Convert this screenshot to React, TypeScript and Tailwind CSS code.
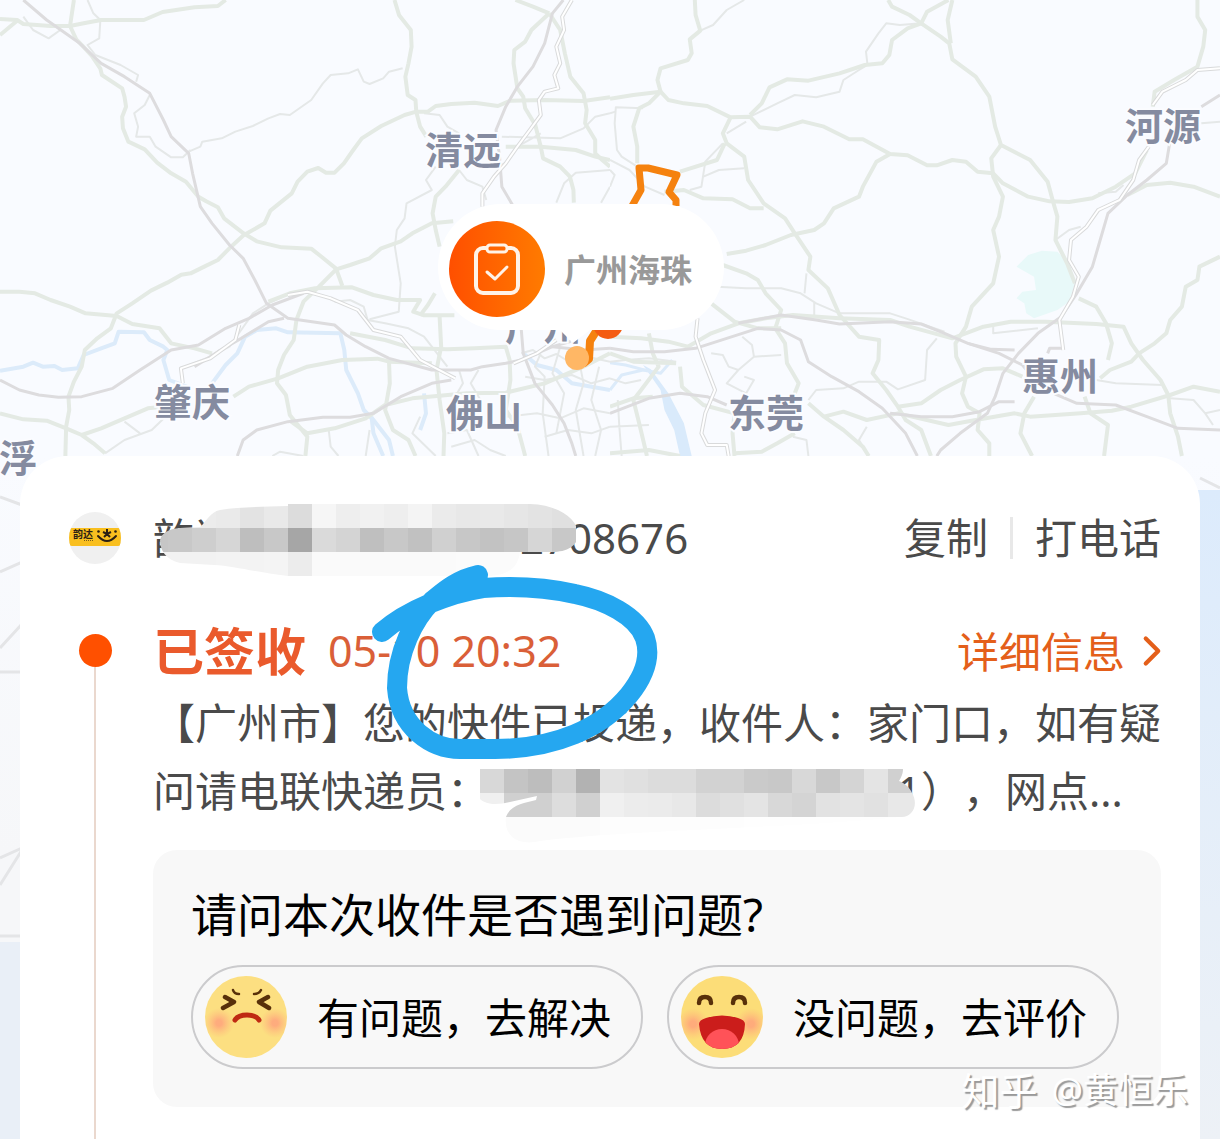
import { ChevronRight } from "lucide-react";

const GREEN = "#e4eae4";
const GREY = "#dddcde";
const WATER = "#dcebfa";

// Each half of the map uses its own 1568x1380 grid.
const westHighways = [
  "M190 0L180 78L196 118L214 140L236 168L258 206L262 225L314 265L320 290L324 320L314 350L316 385L330 425L372 448L404 488L440 520L478 545L510 590L530 604L560 622L576 655L626 700L660 724L724 742L800 746L824 768L864 806L880 858",
  "M0 57L44 60L60 72L130 78L180 78L215 70L260 60L370 60L418 36L500 22L560 18L580 0",
  "M0 105L44 62",
  "M1014 0L1026 46L1056 90L1058 140L1050 190L1042 230L1048 285L1068 300L1070 335L1100 335L1120 318L1160 312L1220 308L1280 318L1312 302L1400 300L1500 303L1568 292",
  "M1070 335L1040 345L980 378L930 415L908 450L884 490L860 518L838 518L818 504L790 515L765 545L750 580L695 632L680 670L626 706L594 740L560 780L525 800L490 820L466 824L430 848L388 872L340 910L300 940L285 985L250 1015L218 1050L210 1100L190 1145L176 1190L178 1230L170 1280L168 1368",
  "M0 875L50 875L90 880L130 900L180 920L220 940L300 948L340 972L410 985L440 1030L500 1045L545 1060",
  "M1412 40L1366 90L1350 125L1322 150L1320 190L1330 265L1345 290L1350 325L1376 375L1390 440L1396 475L1440 500L1465 530L1474 570L1475 608",
  "M1412 40L1440 90L1452 160L1466 230L1500 280L1508 330L1504 370L1530 420L1530 460L1548 480L1568 500",
  "M1412 40L1370 20L1325 0",
  "M1070 335L1080 380L1096 410M1180 510L1145 560L1120 590L1112 640L1120 690L1130 740",
  "M1165 664L1110 670L1060 700L1030 724L980 745L950 775L900 795L864 808L820 860L780 905L762 960L755 1020L730 1065L715 1110L712 1150L735 1185L745 1245L790 1310L785 1368",
  "M690 905L745 880L810 865L905 862L960 885L1020 900L1080 900L1062 935L1090 946L1168 946",
  "M1080 946L1100 915L1118 880M1130 950L1134 1040L1122 1110",
  "M600 1190L640 1160L715 1135L790 1100L880 1080L970 1076L1000 1085L1110 1090",
  "M900 1000L990 1020L1060 1045L1150 1048L1220 1045L1300 1040L1310 1080L1312 1140L1300 1230L1330 1280L1350 1368",
  "M0 1240L60 1258L120 1262L170 1285L210 1305L260 1285L320 1255L380 1225L420 1220M210 1305L240 1330L270 1360",
  "M745 1262L790 1300L860 1285L940 1255L990 1215L1060 1195L1200 1180L1300 1178L1400 1150L1500 1100L1568 1060",
  "M1000 1085L1002 1150L990 1230L1010 1290L1050 1320L1068 1368",
  "M1122 1110L1130 1200L1142 1300L1140 1368",
  "M1300 440L1390 440L1480 450L1530 470L1568 480",
];

const westRailways = [
  "M60 0L120 60L205 130L260 190L320 230L385 280L420 360L440 410L485 460L495 520L515 620L545 670L590 735L625 775L655 840L685 910L740 955L860 975L890 1005L940 1040L1000 1075L1110 1110L1210 1110L1240 1100L1300 1090L1340 1080L1420 1040L1480 1020",
  "M1448 0L1420 40L1400 130L1370 200L1330 260L1300 320L1275 390L1284 470L1290 560L1320 620",
  "M0 1140L50 1170L100 1185L150 1192L210 1190L290 1165L360 1110L440 1050L510 1035L580 985L640 955L700 915L780 880",
  "M610 1368L625 1320L660 1290L740 1265L830 1252L900 1252L960 1240L1030 1190L1110 1150L1160 1140",
  "M500 1100L560 1055L620 1015L690 965L730 955",
  "M1340 990L1345 1060L1375 1150L1420 1215L1450 1270L1470 1330L1480 1368",
  "M1420 1040L1500 1050L1568 1045",
];

const westRoads = [
  "M225 0L240 40L258 60L255 115L225 135L245 165L310 195L355 225L350 245M385 285L372 315L345 340L355 380L350 410L385 410L400 440L440 472L470 472L490 450",
  "M485 455L515 440L520 425L570 415L605 395L650 378L690 355L720 342L745 345L800 300L830 250L850 225L895 220L920 208L935 245L950 252L985 235L1000 215L1035 205",
  "M60 50L85 90L125 115L155 90",
  "M1090 340L1130 345L1150 380L1180 400M1180 510L1200 540L1240 560L1250 600M1120 500L1095 540L1110 570L1045 610L1040 655L1020 690L1015 740L1030 850L1025 935L950 958",
  "M1568 340L1530 350L1500 385L1440 415L1290 410M1270 500L1300 490L1330 440L1390 400",
  "M1568 510L1480 518L1450 550L1430 608M1568 560L1545 608",
  "M270 1360L320 1320L390 1290L430 1245M320 1265L360 1300",
  "M470 1150L465 1105L540 1070L590 1040L620 990L650 940L690 910L750 878L800 875",
  "M860 905L900 900L935 920L945 960L990 970L1050 985L1090 1010L1150 1100",
  "M1180 1110L1190 1150L1170 1190M1230 1110L1210 1150L1235 1200L1215 1250",
  "M845 1290L850 1340L870 1368M950 1290L940 1368M700 1368L720 1355L780 1368",
  "M1340 1060L1370 1050L1400 1075L1430 1062L1470 1090L1510 1070L1568 1085M1350 1130L1400 1140L1470 1125L1520 1150L1568 1135",
  "M1300 1250L1380 1240L1440 1255L1500 1225L1568 1240M1400 1310L1460 1290L1520 1300L1568 1280",
  "M1390 1060L1375 1100L1400 1130L1395 1240L1410 1368M1440 1040L1420 1120L1450 1180L1430 1300M1490 1090L1500 1150L1480 1230L1500 1368M1540 1100L1520 1200L1545 1290L1530 1368",
  "M1160 1340L1220 1320L1260 1350L1300 1368M1150 1300L1200 1290L1230 1368M1080 1250L1060 1300L1120 1368",
];

const westWater = [
  "M0 1112L60 1100L85 1088L110 1100L140 1098L160 1110L200 1105L215 1065L260 1045L295 1030L305 995L370 997L385 1020L420 1040L430 1050L420 1080L435 1140L480 1160",
  "M545 1150L580 1095L610 1060L630 1010L660 990L710 985L740 997L875 1000L885 1050L890 1110L920 1180L935 1230L960 1260L1000 1320L1010 1368",
  "M955 1250L960 1300L985 1368",
  "M1345 1060L1380 1095L1430 1110L1470 1150L1568 1170M1090 1180L1095 1240L1080 1290",
];

const eastHighways = [
  "M218 0L220 45L232 92L205 118L210 160L200 180L130 205L122 240L130 275L100 310L75 325L60 380L70 440L70 490",
  "M0 296L60 285L130 275L150 300L190 310L250 318L310 352L360 350L385 382L430 388L495 364L550 380L615 418L650 418L720 462L765 466L815 496L840 496L880 480L915 485L945 515L985 520L1010 550L1075 590L1130 604L1180 606L1240 595L1300 560L1350 520L1380 450",
  "M715 0L725 20L770 45L800 70L765 85L725 120L718 165L700 190L655 195L590 220L510 242L455 238L410 262L390 310L360 345",
  "M800 70L850 110L872 130L880 178L940 230L975 290L990 380L1005 435L1080 480L1125 545L1140 610L1150 650L1145 720L1175 790L1195 850",
  "M880 0L868 60L876 130M800 70L815 35L870 0",
  "M1005 435L980 475L985 530L1010 590L1000 650L985 690L1000 770L985 850L930 920L915 980L888 1030L890 1070L915 1130L905 1180L920 1220L950 1240L945 1290L975 1330L975 1368",
  "M310 352L290 400L300 430L345 470L355 540L395 610L450 655L475 700L515 770L510 810L560 865L590 945L640 1010L692 1020L690 1080L675 1120L710 1170L740 1220L760 1260L800 1290L825 1368",
  "M295 430L275 480L180 515M140 575L190 570L240 595L315 598L360 625L395 625",
  "M720 462L685 485L650 560L640 590L575 625L550 670L525 690L465 705L400 735L350 752L300 762",
  "M290 795L350 820L380 840L400 880L440 930L425 985L450 1030L455 1090L485 1150L475 1180",
  "M1510 0L1510 50L1530 90L1525 140L1510 200L1450 240L1400 275L1395 320",
  "M1330 585L1380 555L1440 548L1500 560L1568 590",
  "M1568 770L1515 800L1510 840L1480 860L1470 920L1440 960L1430 1000L1400 1030L1360 1060L1340 1085L1285 1110L1260 1135",
  "M0 1010L80 1015L150 1025L200 1040L260 1000L330 970L400 955L470 945L590 955L720 960L770 980L880 1015L960 980L1030 965L1120 965L1250 972L1320 980L1340 1030L1370 1080L1415 1140L1435 1185L1440 1240L1460 1310L1470 1368",
  "M1205 895L1250 920L1275 970L1290 1030L1280 1080",
  "M510 1210L550 1250L600 1290L650 1340L665 1368M550 1250L600 1235L660 1260L740 1240L870 1275L940 1260L1040 1240L1080 1250L1210 1240L1290 1232L1340 1220L1440 1185L1500 1160L1568 1175",
  "M740 1220L800 1210L850 1170L900 1140L960 1108L1010 1105L1060 1130",
  "M1090 1190L1065 1240L1055 1300L1085 1368M1220 1190L1235 1240L1280 1275L1270 1368",
  "M180 1100L185 1160L240 1215L320 1240L315 1300L320 1368M475 1300L430 1330L390 1355L320 1360",
  "M0 1220L60 1195L110 1190M60 1200L75 1270L95 1368",
  "M100 1000L110 1060L125 1100L80 1170L60 1200M0 1060L60 1085L170 1090",
  "M260 910L320 965L380 985L440 985M0 1360L100 1350L180 1368",
];

const eastRailways = [
  "M0 1045L60 1055L140 1055L220 1045L300 1015L380 985L440 990L490 1020L510 1085L570 1130L640 1175L700 1225L760 1300L790 1368",
  "M330 970L440 945L530 960L590 972L720 965L800 972L860 1000L920 1030L1000 1060L1060 1095L1100 1150L1140 1180L1200 1210L1300 1215L1380 1250L1460 1285L1568 1290",
  "M1568 285L1520 320M1440 420L1430 490L1380 540L1330 585L1280 640L1260 720L1240 800L1200 880L1160 950L1100 1000L1050 1060L1010 1120L990 1190L970 1240L900 1300L850 1350L840 1368",
  "M720 1240L800 1250L880 1250L950 1235L1000 1205L1040 1205",
  "M0 1240L100 1195L180 1180L250 1190L300 1215",
  "M1040 1050L980 1048L920 1030M1125 1060L1130 1045L1160 1045",
];

const eastRoads = [
  "M345 0L300 30L265 75L232 92M800 70L745 75L710 70L690 100L658 155L662 195L640 210L600 240L590 275L530 292L475 285L430 310L360 350",
  "M85 325L15 322L12 370L18 450L30 470L70 500M0 480L50 510L90 560L140 585",
  "M0 340L14 335M0 510L12 525L0 560",
  "M300 400L350 365M290 430L245 485L235 560L205 570M345 505L280 510L240 530",
  "M275 860L350 865L440 865L490 880L530 910L590 940L660 940L720 940L760 955L860 995M505 820L500 880M525 905L525 945",
  "M260 1060L290 1065L305 1100L330 1110L370 1070L440 1065M370 1070L365 1035L340 1010M330 1110L300 1150L350 1180L370 1140L345 1130",
  "M510 1200L530 1170L600 1165L640 1145L710 1145L740 1168L810 1140L815 1050L840 1015",
  "M1145 720L1180 690L1210 680M1255 580L1300 575L1320 555",
  "M985 980L985 1000L1100 985M1250 1140L1300 1150L1420 1155L1440 1190",
  "M1440 1195L1500 1200L1530 1240L1568 1230M1530 1240L1550 1275M1520 370L1568 365",
  "M0 1085L40 1080L100 1075L170 1085M0 1135L40 1150L80 1140M0 1280L100 1275M20 1200L24 1280L30 1368",
  "M470 1310L505 1320L510 1368M660 1280L640 1320L665 1368",
];

const eastWater = ["M0 1170L30 1125L85 1110L130 1120L160 1080", "M0 1088L40 1095L95 1112"];

// White-cased roads, drawn as a grey line with a white core.
const casedWest = [
  "M1470 0L1445 50L1450 90L1430 140L1440 190L1425 225L1435 265L1400 275L1385 300L1390 345L1365 385L1330 440L1300 490L1270 530L1240 580L1240 620",
  "M740 885L790 875L850 895L920 930L960 990L1030 1010L1080 1080L1170 1135",
  "M470 1150L465 1105L540 1075L605 1020L615 975",
  "M1320 1090L1380 1060L1430 1020",
];
const casedEast = [
  "M1568 205L1510 210L1480 240L1420 275L1395 315M1385 440L1360 480L1345 540L1310 600L1255 630L1225 680L1185 720L1180 780L1205 830L1190 890L1155 960L1165 1050",
  "M225 955L220 1010L240 1080L270 1170L245 1240L235 1300L250 1335L300 1335L305 1368",
];

const cities = [
  { name: "清远", x: 425, y: 164 },
  { name: "河源", x: 1125, y: 140 },
  { name: "广州", x: 505, y: 340 },
  { name: "肇庆", x: 154, y: 416 },
  { name: "佛山", x: 446, y: 427 },
  { name: "东莞", x: 728, y: 427 },
  { name: "惠州", x: 1022, y: 390 },
  { name: "浮", x: -1, y: 472 },
];

function Lines({ paths, color, width }: { paths: string[]; color: string; width: number }) {
  return (
    <g fill="none" stroke={color} strokeWidth={width} strokeLinejoin="round">
      {paths.map((d) => (
        <path key={d} d={d} vectorEffect="non-scaling-stroke" />
      ))}
    </g>
  );
}

function RouteMap() {
  return (
    <svg viewBox="0 0 1220 1139" className="absolute inset-x-0 top-0 w-full" role="img" aria-label="物流地图">
      <defs>
        <linearGradient id="land" x1="0" y1="0" x2="0" y2="1">
          <stop offset="0.4" stopColor="#f9fbff" />
          <stop offset="0.75" stopColor="#f6f7f9" />
        </linearGradient>
        <linearGradient id="sea" x1="0" y1="0" x2="0" y2="1">
          <stop offset="0" stopColor="#dcebfc" />
          <stop offset="1" stopColor="#edf1f6" />
        </linearGradient>
        <linearGradient id="pin">
          <stop offset="0" stopColor="#ff4f00" />
          <stop offset="1" stopColor="#ff7b00" />
        </linearGradient>
      </defs>
      <rect width="1220" height="1139" fill="url(#land)" />
      <path d="M1190 490H1220V1139H1190Z" fill="url(#sea)" />
      <path d="M0 942H30V1139H0Z" fill="#e9eff7" />
      <g fill="none" stroke="#e4e5e7" strokeWidth="3">
        <path d="M0 497L22 505M0 572L22 562L30 545M0 648L22 624M0 672H22M0 858L22 848M0 885L22 850M0 936H22" />
        <path d="M1200 478L1220 488" />
      </g>

      <svg width="610" height="460" viewBox="0 0 1568 1380" preserveAspectRatio="none">
        <Lines paths={westWater} color={WATER} width={4} />
        <Lines paths={westRoads} color="#e5e8e8" width={2} />
        <Lines paths={westHighways} color={GREEN} width={4} />
        <Lines paths={westRailways} color={GREY} width={3} />
        <Lines paths={casedWest} color="#d9dadb" width={4} />
        <Lines paths={casedWest} color="#ffffff" width={2} />
      </svg>
      <svg x="610" width="610" height="460" viewBox="0 0 1568 1380" preserveAspectRatio="none">
        <path d="M1045 800L1075 765L1110 752L1150 755L1175 785L1195 850L1180 905L1150 930L1090 955L1070 940L1065 910L1045 895L1060 875L1095 870L1090 830Z" fill="#e8f9f9" />
        <path d="M85 1095L105 1108L150 1180L190 1270L210 1368H180L165 1290L140 1230L130 1170Z" fill="#d9eafb" />
        <Lines paths={eastWater} color={WATER} width={3} />
        <Lines paths={eastRoads} color="#e5e8e8" width={2} />
        <Lines paths={eastHighways} color={GREEN} width={4} />
        <Lines paths={eastRailways} color={GREY} width={3} />
        <Lines paths={casedEast} color="#d9dadb" width={4} />
        <Lines paths={casedEast} color="#ffffff" width={2} />
      </svg>

      <g
        className="font-['Noto_Sans_CJK_SC',sans-serif] font-bold"
        fontSize="38"
        fill="#858ba0"
        stroke="#fbfcff"
        strokeWidth="4"
        paintOrder="stroke"
      >
        {cities.map((city) => (
          <text key={city.name} x={city.x} y={city.y}>
            {city.name}
          </text>
        ))}
      </g>

      <g fill="none" stroke="#f5820f" strokeWidth="7" strokeLinejoin="round">
        <path d="M632 206L641 190L639 168L648 168L677 175L669 192L676 200V206" />
        <path d="M597 330L590 341L589 359L583 364" strokeWidth="8" />
      </g>
      <circle cx="608" cy="324" r="15" fill="#f45c12" />
      <circle cx="577" cy="358" r="12" fill="#ffb765" />

      <path
        d="M501 204H661A63 63 0 0 1 661 330H590L573 343L560 330H501A63 63 0 0 1 501 204Z"
        fill="#fff"
      />
      <circle cx="497" cy="269" r="48" fill="url(#pin)" />
      <g fill="none" stroke="#fff3e8" strokeWidth="4" strokeLinecap="round" strokeLinejoin="round">
        <path d="M486 248H483A7 7 0 0 0 476 255V286A7 7 0 0 0 483 293H511A7 7 0 0 0 518 286V255A7 7 0 0 0 511 248H508" />
        <rect x="487" y="245" width="20" height="7" rx="3" strokeWidth="3" />
        <path d="M487 272L495 279L507 267" strokeWidth="3" />
      </g>
      <text x="564" y="282" fontSize="32" fill="#999" className="font-['Noto_Sans_CJK_SC',sans-serif] font-bold">
        广州海珠
      </text>
    </svg>
  );
}

function CourierLogo() {
  return (
    <svg viewBox="0 0 52 52" className="size-[52px] shrink-0" role="img" aria-label="韵达">
      <clipPath id="logoClip">
        <circle cx="26" cy="26" r="26" />
      </clipPath>
      <g clipPath="url(#logoClip)">
        <rect width="52" height="52" fill="#f0f0f0" />
        <rect y="16" width="52" height="18" rx="3" fill="#f9bf1f" />
      </g>
      <text x="4" y="26" fontSize="10" fill="#2b2013" className="font-['Noto_Sans_CJK_SC',sans-serif] font-bold">
        韵达
      </text>
      <path d="M15 28.500H25" stroke="#7a5c1b" strokeWidth="1" strokeDasharray="1 1" />
      <path d="M29 24Q38 34 47 24" fill="none" stroke="#2b2013" strokeWidth="2" strokeLinecap="round" />
      <path d="M38 17V22L35 25M38 22L41 25M34 20L38 22L42 20" fill="none" stroke="#2b2013" strokeWidth="2" />
      <circle cx="29.500" cy="19.500" r="1.300" fill="#2b2013" />
      <circle cx="46.500" cy="19.500" r="1.300" fill="#2b2013" />
    </svg>
  );
}

const numberMask = [
  ["ec", "ec", "ec", "ea", "e3", "e9", "dc", "f6", "ee", "f1", "ee", "f4", "eb", "e8", "e9", "e6", "e3", "e0"],
  ["c6", "c8", "ce", "d6", "be", "c8", "a6", "da", "d4", "bf", "c8", "c1", "d0", "c7", "c2", "c6", "d6", "c8"],
  ["f2", "f2", "f2", "f3", "f3", "f4", "ec", "fa", "fa", "fa", "fa", "fa", "fa", "fb", "fb", "fb", "fb", "fb"],
];

const phoneMask = [
  ["d8", "c4", "bd", "d1", "b2", "e3", "e0", "dc", "dc", "d2", "d2", "ca", "c8", "d8", "c8", "d4", "e4", "d0", "d0"],
  ["f0", "d0", "d0", "dd", "d0", "f0", "ec", "eb", "e8", "dc", "e0", "e4", "d8", "d4", "e2", "e4", "e1", "e8", "e8"],
  ["fb", "fb", "fb", "fb", "fb", "fd", "fd", "fd", "fd", "fd", "fd", "fe", "fe", "fe", "fe", "fe", "fe", "fe", "fe"],
];

function Mosaic({ id, rows, shape, className }: { id: string; rows: string[][]; shape: string; className: string }) {
  return (
    <svg viewBox="0 0 456 80" className={className} aria-hidden="true">
      <clipPath id={id}>
        <path d={shape} />
      </clipPath>
      <g clipPath={`url(#${id})`} shapeRendering="crispEdges">
        {rows.map((row, r) =>
          row.map((v, c) => (
            <rect key={`${r}-${c}`} x={c * 24} y={r * 24} width="24" height={r === 2 ? 32 : 24} fill={`#${v}${v}${v}`} />
          )),
        )}
      </g>
    </svg>
  );
}

function SadFace() {
  return (
    <svg viewBox="0 0 82 82" className="size-[82px] shrink-0" aria-hidden="true">
      <defs>
        <radialGradient id="blush">
          <stop offset="0.2" stopColor="#ff9b7c" stopOpacity="0.75" />
          <stop offset="1" stopColor="#ffb27c" stopOpacity="0" />
        </radialGradient>
        <clipPath id="faceClip">
          <circle cx="41" cy="41" r="41" />
        </clipPath>
      </defs>
      <g clipPath="url(#faceClip)">
        <rect width="82" height="82" fill="#fcdf81" />
        <circle cx="14" cy="47" r="15" fill="url(#blush)" />
        <circle cx="70" cy="47" r="15" fill="url(#blush)" />
      </g>
      <g fill="none" stroke="#58300a" strokeLinecap="round" strokeLinejoin="round">
        <path d="M28 14Q29 18 34 18M56 14Q54 18 49 18" strokeWidth="2.500" />
        <path d="M20 21L29 26L18 32M63 21L54 26L64 32" strokeWidth="4.500" />
      </g>
      <path d="M30 44Q33 39 42 39Q51 39 54 44" fill="none" stroke="#bf2a12" strokeWidth="5" strokeLinecap="round" />
    </svg>
  );
}

function HappyFace() {
  return (
    <svg viewBox="0 0 82 82" className="size-[82px] shrink-0" aria-hidden="true">
      <g clipPath="url(#faceClip)">
        <rect width="82" height="82" fill="#fcdd78" />
        <circle cx="12" cy="48" r="16" fill="url(#blush)" />
        <circle cx="70" cy="48" r="16" fill="url(#blush)" />
      </g>
      <path
        d="M18 27Q18 21 24 21Q30 21 30 27M52 27Q52 21 58 21Q64 21 64 27"
        fill="none"
        stroke="#58300a"
        strokeWidth="4.500"
        strokeLinecap="round"
      />
      <clipPath id="mouth">
        <path d="M18 48Q18 44 25 42Q41 37 57 42Q64 44 64 48Q63 73 41 73Q20 73 18 48Z" />
      </clipPath>
      <g clipPath="url(#mouth)">
        <rect width="82" height="82" fill="#cb1d1b" />
        <ellipse cx="41" cy="69" rx="17" ry="16" fill="#ff5258" />
      </g>
    </svg>
  );
}

function CircleMark() {
  return (
    <svg viewBox="365 560 300 205" className="pointer-events-none absolute -top-[57px] left-[212px] w-[300px]" aria-hidden="true">
      <path
        d="M478 575C455 580 441 594 432 601C414 619 397 652 397 688C400 728 432 749 460 749H495C555 749 602 728 629 695C646 674 651 656 645 638C637 616 605 600 575 594C540 586 510 586 483 588C450 593 407 610 382 632"
        fill="none"
        stroke="#25a7f0"
        strokeWidth="20"
        strokeLinecap="round"
        strokeLinejoin="round"
      />
    </svg>
  );
}

export default function App() {
  return (
    <div className="relative flex min-h-screen flex-col overflow-hidden bg-[#f9fbff] font-['Noto_Sans','Noto_Sans_CJK_SC',sans-serif] text-[42px] text-[#4a4a4a]">
      <RouteMap />

      <main className="relative mx-5 mt-[456px] flex grow flex-col rounded-t-[48px] bg-white pt-[52px] pr-[39px] pl-[49px]">
        <header className="relative flex h-[60px] items-center leading-[60px] whitespace-nowrap">
          <CourierLogo />
          <span className="ml-8 w-[367px]">韵达</span>
          <span>2708676</span>
          <Mosaic
            id="numberMask"
            rows={numberMask}
            className="absolute -top-1 left-[75px] w-[456px]"
            shape="M16 36C18 29 24 25 36 24L56 23C63 17 66 8 76 6C95 3 115 3 144 2V0H386C416 1 434 16 434 30C434 42 423 48 408 48H376C374 64 364 71 346 72H144C110 68 90 62 70 61L36 59C22 56 16 46 16 36Z"
          />
          <div className="ml-auto flex items-center gap-[22px]">
            <button type="button">复制</button>
            <span className="h-[42px] w-[3px] bg-[#e8e8e8]" />
            <button type="button">打电话</button>
          </div>
        </header>

        <section className="mt-[49px] flex grow gap-8">
          <div className="flex w-[52px] shrink-0 flex-col items-center pt-[17px]">
            <span className="size-[33px] shrink-0 rounded-full bg-[#ff5000]" />
            <span className="w-[2px] grow bg-[#ead8ce]" />
          </div>

          <div className="relative min-w-0 grow pb-8">
            <div className="flex h-[68px] items-center whitespace-nowrap">
              <h1 className="text-[51px] font-bold text-[#ea5a2c]">已签收</h1>
              <time className="ml-[22px] text-[43px] text-[#da5f38]">05-10 20:32</time>
              <a href="#detail" className="ml-auto flex items-center text-[#e45f1a]">
                详细信息
                <ChevronRight className="-mr-4 ml-0.5 size-[50px]" strokeWidth={2} />
              </a>
            </div>
            <p className="mt-1 leading-[68px] [text-spacing-trim:space-all]">
              【广州市】您的快件已投递，收件人：家门口，如有疑问请电联快递员：
              <span className="relative inline-block w-[432px] text-right">
                1
                <Mosaic
                  id="phoneMask"
                  rows={phoneMask}
                  className="absolute top-[12px] -left-[9px] w-[456px]"
                  shape="M0 0H423C423 6 420 10 419 12C424 14 429 18 431 22C440 36 432 48 422 48C300 60 160 60 60 72C34 78 24 64 26 48C30 36 44 34 56 31L57 27L30 33C18 36 6 36 0 30Z"
                />
              </span>
              ），网点...
            </p>
            <CircleMark />

            <div className="mt-[25px] rounded-3xl bg-[#f8f8f8] px-[38px] pt-[34px] pb-[38px] text-black">
              <h2 className="text-[46px] leading-[60px]">请问本次收件是否遇到问题?</h2>
              <div className="mt-[21px] flex gap-6">
                <button
                  type="button"
                  className="flex h-[104px] w-[452px] items-center gap-[30px] rounded-full border-2 border-[#cbcbcd] pl-3 whitespace-nowrap"
                >
                  <SadFace />
                  有问题，去解决
                </button>
                <button
                  type="button"
                  className="flex h-[104px] w-[452px] items-center gap-[30px] rounded-full border-2 border-[#cbcbcd] pl-3 whitespace-nowrap"
                >
                  <HappyFace />
                  没问题，去评价
                </button>
              </div>
            </div>
          </div>
        </section>
      </main>

      <div className="absolute right-8 bottom-6 flex items-center gap-3.5 text-[38px] leading-[50px] text-white [text-shadow:2px_2px_1px_#999]">
        <span>知乎</span>
        <span className="text-[35px]">@黄恒乐</span>
      </div>
    </div>
  );
}
